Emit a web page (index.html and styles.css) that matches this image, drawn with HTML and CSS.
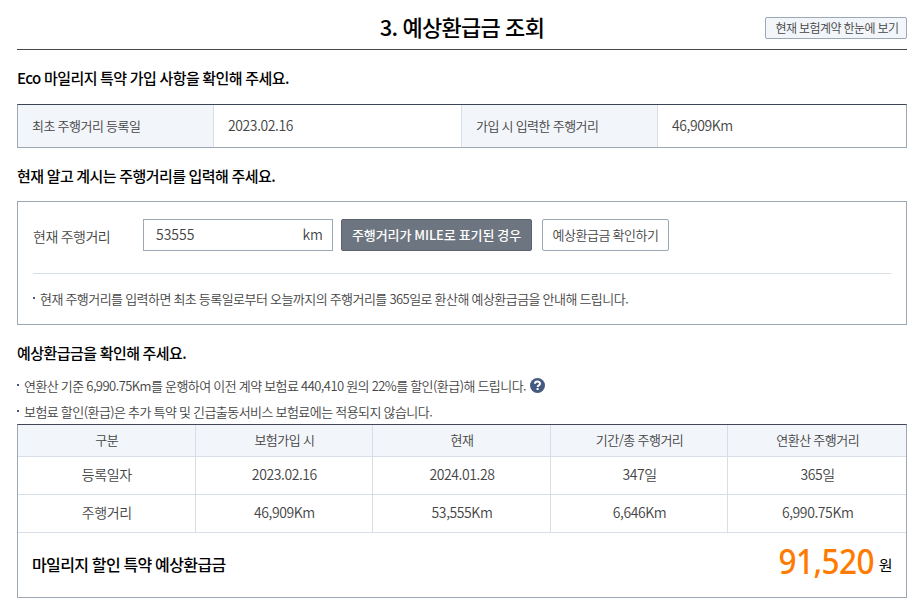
FILE: index.html
```html
<!DOCTYPE html>
<html lang="ko">
<head>
  <meta charset="UTF-8">
  <meta name="viewport" content="width=device-width, initial-scale=1.0">
  <title>예상환급금 조회</title>
  <link rel="stylesheet" href="styles.css">
</head>
<body>

<div class="container">
  <header class="page-head">
    <h1>3. 예상환급금 조회</h1>
    <button type="button" class="btn-small">현재 보험계약 한눈에 보기</button>
  </header>

  <h2>Eco 마일리지 특약 가입 사항을 확인해 주세요.</h2>
  <table class="info-table">
    <tr>
      <th>최초 주행거리 등록일</th>
      <td>2023.02.16</td>
      <th>가입 시 입력한 주행거리</th>
      <td>46,909Km</td>
    </tr>
  </table>

  <h2 class="title-input">현재 알고 계시는 주행거리를 입력해 주세요.</h2>
  <div class="input-box">
    <div class="input-row">
      <label for="distance">현재 주행거리</label>
      <div class="field">
        <input type="text" id="distance" value="53555">
        <span>km</span>
      </div>
      <button type="button" class="btn btn-dark">주행거리가 MILE로 표기된 경우</button>
      <button type="button" class="btn btn-check">예상환급금 확인하기</button>
    </div>
    <ul class="notes box-note">
      <li>현재 주행거리를 입력하면 최초 등록일로부터 오늘까지의 주행거리를 365일로 환산해 예상환급금을 안내해 드립니다.</li>
    </ul>
  </div>

  <h2 class="title-result">예상환급금을 확인해 주세요.</h2>
  <ul class="notes">
    <li>연환산 기준 6,990.75Km를 운행하여 이전 계약 보험료 440,410 원의 22%를 할인(환급)해 드립니다.
      <svg class="help" width="15" height="15" viewBox="0 0 15 15">
        <circle cx="7.5" cy="7.5" r="7.5" fill="#455a80"/>
        <path d="M5 5.8C5 2.9 10 2.9 10 5.7C10 7.5 7.6 7.2 7.6 9" fill="none" stroke="#fff" stroke-width="2"/>
        <rect x="6.6" y="10" width="2" height="2" fill="#fff"/>
      </svg>
    </li>
    <li>보험료 할인(환급)은 추가 특약 및 긴급출동서비스 보험료에는 적용되지 않습니다.</li>
  </ul>

  <table class="result-table">
    <thead>
      <tr>
        <th>구분</th>
        <th>보험가입 시</th>
        <th>현재</th>
        <th>기간/총 주행거리</th>
        <th>연환산 주행거리</th>
      </tr>
    </thead>
    <tbody>
      <tr>
        <td>등록일자</td>
        <td>2023.02.16</td>
        <td>2024.01.28</td>
        <td>347일</td>
        <td>365일</td>
      </tr>
      <tr>
        <td>주행거리</td>
        <td>46,909Km</td>
        <td>53,555Km</td>
        <td>6,646Km</td>
        <td>6,990.75Km</td>
      </tr>
    </tbody>
  </table>
  <div class="total">
    <span>마일리지 할인 특약 예상환급금</span>
    <p><strong>91,520</strong> 원</p>
  </div>
</div>

</body>
</html>
```
FILE: styles.css
```css
* {
  box-sizing: border-box;
  margin: 0;
  padding: 0;
}
body {
  font-family: "Noto Sans CJK KR", sans-serif;
  font-size: 14px;
  font-weight: 350;
  letter-spacing: -0.5px;
  word-spacing: -0.5px;
  color: #444;
  background-color: #fff;
}
.container {
  width: 890px;
  margin-left: 17px;
}
.page-head {
  display: grid;
  grid-template-columns: 1fr auto 1fr;
  align-items: center;
  height: 50px;
  padding-top: 6px;
  border-bottom: 1px solid #484848;
}
h1 {
  grid-column: 2;
  padding-bottom: 4px;
  font-size: 22px;
  font-weight: 500;
  line-height: 32px;
  letter-spacing: -0.7px;
  color: #000;
}
button,
input {
  font-family: inherit;
  font-weight: inherit;
  letter-spacing: inherit;
  word-spacing: inherit;
  color: inherit;
}
.btn-small {
  justify-self: end;
  width: 142px;
  height: 22px;
  padding-left: 2px;
  font-size: 12px;
  line-height: 20px;
  border: 1px solid #9ca8b3;
  border-radius: 2px;
  background-color: #f2f5fa;
}
h2 {
  margin-top: 17px;
  font-size: 15px;
  font-weight: 500;
  line-height: 22px;
  letter-spacing: -0.55px;
  color: #000;
}
table {
  width: 100%;
  table-layout: fixed;
  border-collapse: separate;
  border-spacing: 0;
}
th {
  font-size: 13px;
  font-weight: inherit;
  background-color: #f2f5fa;
}
td {
  letter-spacing: -0.4px;
}
.info-table {
  height: 44px;
  margin-top: 15px;
  border: 1px solid #9ca8b3;
  border-top-color: #3c4555;
}
.info-table th,
.info-table td {
  padding: 0 0 2px 14px;
  text-align: left;
  border-right: 1px solid #d8dee8;
}
.info-table th {
  width: 196px;
}
.info-table td:last-child {
  border-right: 0;
}
.input-box {
  height: 124px;
  margin-top: 14px;
  padding: 17px 15px 0;
  border: 1px solid #9ca8b3;
}
.input-row {
  display: flex;
  height: 55px;
  border-bottom: 1px solid #d8e0e6;
}
.input-row label {
  width: 110px;
  line-height: 34px;
}
.field {
  display: flex;
  align-items: center;
  width: 190px;
  height: 32px;
  padding: 0 9px 2px 12px;
  border: 1px solid #9ca8b3;
  letter-spacing: 0;
}
.field input {
  flex: 1;
  min-width: 0;
  font-size: 14px;
  border: 0;
  outline: 0;
}
.btn {
  height: 32px;
  padding-bottom: 2px;
  font-size: 13px;
  border: 1px solid #9ca8b3;
  border-radius: 2px;
  background-color: #fff;
}
.btn-dark {
  width: 191px;
  margin: 0 10px 0 8px;
  font-weight: 500;
  letter-spacing: -0.1px;
  color: #fff;
  border-color: #5b6470;
  background-color: #6d7580;
}
.btn-check {
  width: 127px;
}
.notes {
  margin-top: 8px;
  list-style: none;
  font-size: 13px;
  letter-spacing: -0.54px;
}
.notes li {
  display: flex;
  align-items: center;
  height: 26px;
}
.notes li::before {
  content: "";
  width: 2px;
  height: 2px;
  margin-right: 5px;
  background-color: #455a80;
}
.box-note {
  margin-top: 11px;
}
.help {
  margin-left: 4px;
}
.title-result {
  margin-top: 17px;
}
.result-table {
  border: 1px solid #9ca8b3;
  border-top-color: #454459;
  border-bottom: 0;
}
.result-table th,
.result-table td {
  height: 38px;
  padding: 0 0 3px 1px;
  text-align: center;
  border-right: 1px solid #d8dee8;
  border-bottom: 1px solid #d8dee8;
}
.result-table th {
  height: 32px;
}
.result-table th:last-child,
.result-table td:last-child {
  border-right: 0;
}
.total {
  display: flex;
  justify-content: space-between;
  align-items: center;
  height: 65px;
  padding: 0 14px 1px;
  font-size: 16px;
  font-weight: 500;
  letter-spacing: -0.6px;
  color: #000;
  border: 1px solid #9ca8b3;
  border-top: 0;
}
.total span {
  padding-bottom: 2px;
}
.total p {
  display: flex;
  align-items: center;
  gap: 5px;
  font-size: 15px;
  font-weight: 400;
}
.total strong {
  padding-bottom: 7px;
  font-family: "Noto Sans", sans-serif;
  font-size: 35px;
  font-weight: 500;
  line-height: 50px;
  letter-spacing: -0.6px;
  color: #ff7a00;
  transform: scaleX(0.9);
  transform-origin: right;
}
```
